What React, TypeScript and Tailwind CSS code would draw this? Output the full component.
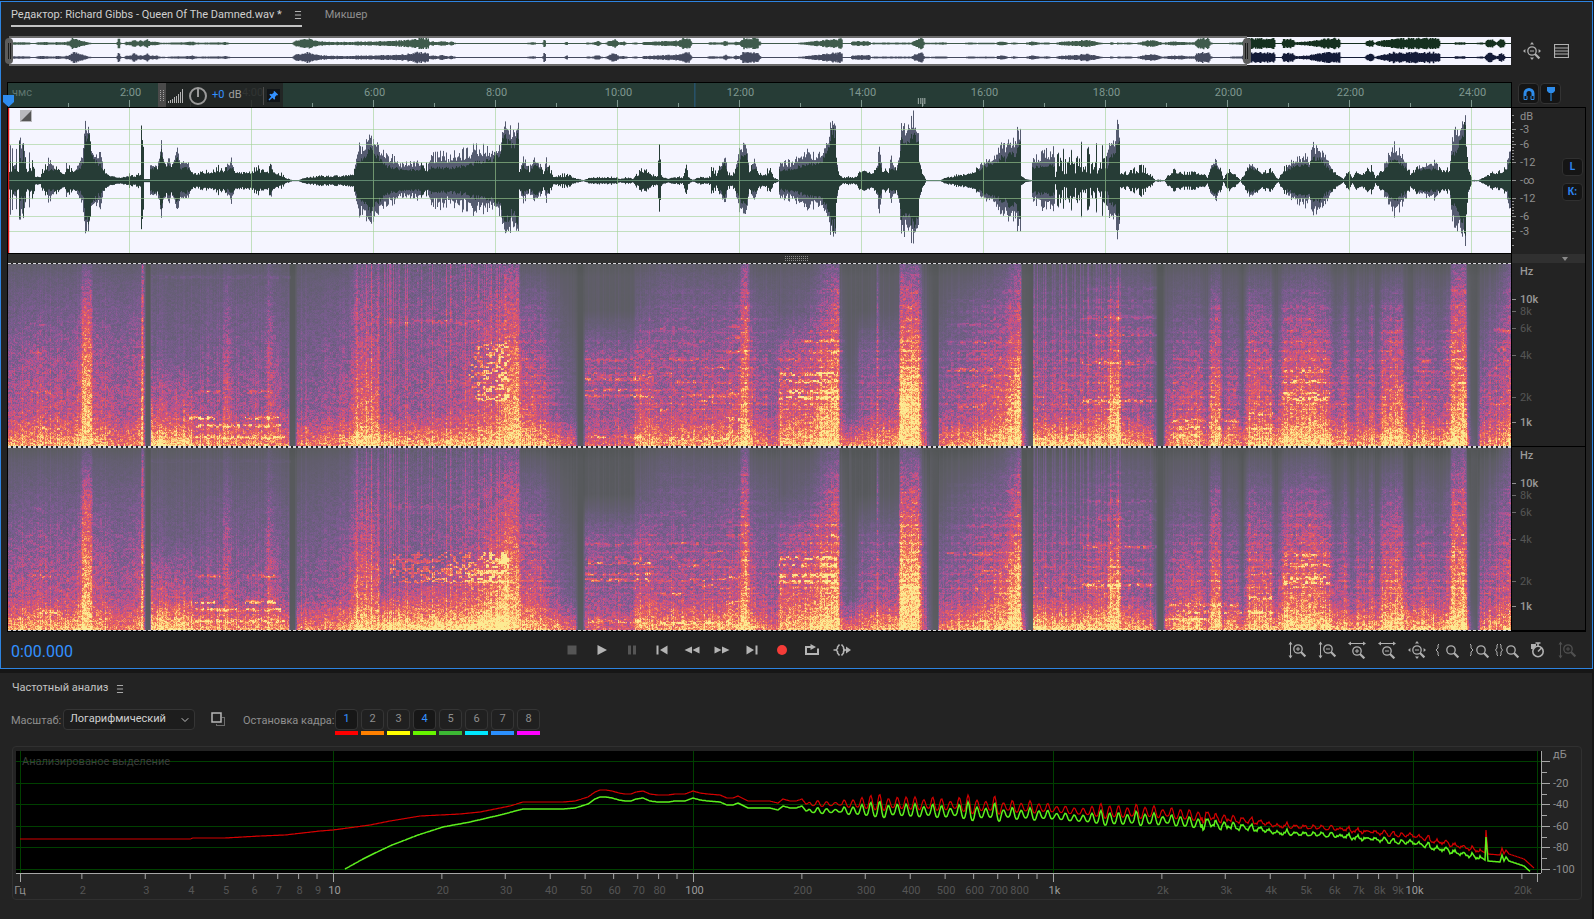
import { useEffect, useRef } from 'react';
import type { ReactNode } from 'react';
import { ChevronDown, Menu } from 'lucide-react';

type Env = [number, number, number];
type Spec = [number, number, number, number, number, number];
type Band = [number, number, number, number];

const WAVE_W = 1503;

// x, body height, peak height
const ENVELOPE: Env[] = [
    [0, 8, 44], [24, 8, 46], [26, 3, 4], [31, 3, 5], [35, 8, 18], [39, 10, 25], [43, 10, 18], [51, 7, 12], [55, 6, 10],
    [57, 10, 22], [61, 8, 18], [66, 8, 14], [71, 12, 22], [74, 18, 35], [76, 40, 60], [80, 42, 59], [82, 26, 36],
    [86, 18, 28], [91, 15, 36], [94, 8, 14], [98, 5, 6], [103, 3, 4], [111, 2, 3], [118, 3, 5], [121, 4, 8], [125, 3, 4],
    [131, 5, 9], [132, 48, 49], [134, 30, 35], [135, 1, 1], [140, 1, 1], [141, 10, 16], [146, 12, 18], [148, 10, 12],
    [152, 28, 42], [154, 20, 24], [157, 12, 14], [159, 18, 31], [162, 12, 14], [168, 24, 34], [171, 12, 18], [179, 12, 22],
    [184, 5, 7], [191, 5, 9], [201, 7, 12], [214, 8, 18], [222, 12, 26], [227, 6, 9], [241, 6, 11], [254, 8, 19],
    [258, 6, 9], [262, 10, 20], [266, 5, 7], [272, 4, 8], [278, 1, 2], [283, 0, 0], [289, 0, 0], [296, 2, 3], [311, 3, 5],
    [331, 3, 5], [344, 5, 6], [346, 12, 20], [349, 20, 42], [353, 20, 38], [358, 28, 47], [362, 30, 46], [369, 22, 40],
    [376, 14, 29], [386, 12, 26], [391, 10, 19], [406, 10, 22], [418, 9, 19], [420, 12, 29], [441, 12, 31], [461, 15, 35],
    [466, 17, 40], [481, 19, 34], [491, 26, 36], [493, 38, 62], [497, 42, 66], [502, 33, 54], [506, 36, 62], [509, 46, 62],
    [510, 8, 14], [514, 14, 30], [520, 8, 14], [525, 16, 24], [531, 10, 17], [534, 6, 10], [536, 12, 26], [541, 6, 14],
    [544, 3, 4], [556, 3, 8], [568, 1, 2], [574, 0, 0], [581, 2, 3], [606, 2, 4], [611, 1, 1], [616, 2, 4], [624, 1, 2],
    [626, 3, 6], [633, 7, 14], [636, 8, 14], [641, 4, 8], [648, 3, 5], [650, 36, 37], [652, 3, 5], [659, 1, 2],
    [663, 2, 4], [674, 2, 4], [677, 14, 18], [679, 2, 4], [684, 0, 1], [691, 2, 4], [701, 2, 4], [702, 8, 18], [707, 4, 8],
    [715, 16, 29], [719, 5, 9], [724, 4, 9], [730, 20, 34], [736, 28, 42], [738, 20, 30], [740, 8, 12], [746, 12, 24],
    [750, 5, 9], [756, 4, 7], [759, 6, 16], [762, 7, 14], [764, 2, 3], [769, 0, 1], [770, 10, 22], [781, 10, 22],
    [791, 14, 26], [797, 15, 32], [811, 17, 29], [815, 22, 46], [819, 32, 48], [822, 46, 64], [826, 48, 62], [827, 20, 25],
    [829, 6, 9], [833, 2, 3], [844, 2, 5], [847, 3, 4], [851, 8, 12], [857, 8, 12], [861, 6, 8], [867, 8, 16],
    [870, 18, 36], [873, 8, 14], [879, 6, 12], [882, 12, 26], [887, 8, 14], [890, 20, 25], [892, 38, 58], [898, 40, 58],
    [902, 44, 72], [906, 44, 68], [909, 38, 56], [910, 18, 20], [913, 6, 8], [917, 0, 0], [931, 0, 0], [936, 2, 3],
    [946, 3, 5], [950, 4, 10], [956, 4, 6], [966, 8, 12], [976, 14, 22], [986, 17, 26], [992, 22, 40], [997, 20, 36],
    [1000, 26, 50], [1006, 26, 44], [1009, 32, 64], [1011, 35, 52], [1012, 4, 5], [1016, 1, 1], [1022, 0, 0],
    [1023, 12, 22], [1031, 14, 32], [1045, 14, 36], [1046, 3, 14], [1049, 6, 36], [1065, 6, 36], [1075, 6, 40],
    [1096, 6, 44], [1100, 20, 38], [1106, 28, 50], [1108, 34, 64], [1110, 36, 52], [1111, 6, 10], [1119, 5, 9],
    [1125, 6, 14], [1134, 8, 18], [1141, 4, 7], [1146, 0, 1], [1155, 0, 0], [1159, 4, 7], [1166, 7, 13], [1176, 5, 9],
    [1185, 6, 9], [1196, 5, 8], [1198, 2, 3], [1201, 10, 15], [1206, 15, 23], [1211, 8, 15], [1214, 1, 2], [1220, 8, 12],
    [1226, 4, 6], [1231, 0, 0], [1236, 6, 10], [1241, 13, 18], [1248, 9, 13], [1253, 5, 8], [1261, 8, 14], [1267, 2, 3],
    [1269, 1, 1], [1274, 8, 13], [1284, 13, 26], [1291, 14, 25], [1295, 16, 30], [1300, 14, 20], [1303, 22, 40],
    [1311, 20, 34], [1316, 15, 27], [1324, 7, 10], [1331, 3, 4], [1334, 1, 1], [1339, 8, 12], [1343, 2, 3], [1347, 7, 10],
    [1353, 5, 8], [1361, 8, 19], [1366, 2, 3], [1371, 6, 11], [1377, 12, 22], [1381, 18, 34], [1383, 20, 50],
    [1386, 18, 38], [1391, 17, 38], [1396, 12, 22], [1401, 5, 8], [1409, 10, 15], [1416, 12, 17], [1421, 10, 19],
    [1425, 12, 23], [1431, 8, 13], [1440, 8, 14], [1442, 24, 42], [1446, 28, 55], [1451, 40, 62], [1456, 54, 68],
    [1457, 32, 35], [1459, 10, 14], [1463, 0, 1], [1469, 0, 0], [1476, 3, 4], [1486, 6, 12], [1497, 8, 15],
    [1500, 20, 40], [1503, 30, 42],
];

// the part of the overview that lies after the zoomed range
const OVERVIEW_TAIL: Env[] = [
    [1238, 36, 40], [1265, 38, 40], [1267, 2, 2], [1273, 3, 4], [1275, 28, 30], [1284, 26, 30], [1287, 8, 8],
    [1300, 14, 14], [1331, 40, 40], [1332, 6, 6], [1334, 0, 0], [1356, 0, 0], [1358, 14, 16], [1364, 24, 24],
    [1366, 3, 3], [1369, 12, 16], [1385, 30, 30], [1430, 40, 40], [1432, 0, 0], [1446, 0, 0], [1447, 8, 8],
    [1456, 8, 8], [1458, 1, 1], [1474, 7, 7], [1476, 0, 0], [1479, 26, 28], [1484, 26, 28], [1488, 6, 6],
    [1492, 24, 24], [1495, 22, 24], [1497, 0, 0], [1503, 0, 0],
];

// x, then level at 0, 25, 50, 80 and 100 percent of the height from the top
const SPECTRUM_COLUMNS: Spec[] = [
    [0, .2, .31, .42, .52, .9], [20, .2, .34, .46, .58, .92], [60, .2, .34, .44, .56, .92], [70, .22, .34, .48, .62, .95],
    [74, .32, .62, .78, .9, 1], [81, .32, .62, .78, .9, 1], [84, .22, .36, .48, .62, .95], [110, .2, .34, .42, .5, .8],
    [131, .2, .36, .46, .56, .85], [133, .5, .7, .8, .9, 1], [135, .3, .4, .45, .5, .6], [137, .06, .06, .06, .07, .1],
    [140, .04, .04, .04, .05, .08], [142, .2, .27, .34, .6, 1], [182, .2, .27, .33, .58, 1], [186, .2, .27, .34, .48, .85],
    [212, .2, .3, .38, .48, .85], [218, .26, .42, .54, .66, .9], [224, .2, .3, .38, .48, .85], [254, .2, .3, .38, .48, .85],
    [260, .28, .42, .56, .66, .9], [266, .22, .32, .42, .54, .88], [279, .18, .26, .34, .42, .8], [281, .04, .04, .04, .05, .08],
    [285, .04, .04, .04, .05, .08], [288, .18, .26, .34, .42, .8], [340, .22, .34, .42, .52, .9], [346, .34, .48, .58, .74, 1],
    [368, .38, .5, .58, .74, 1], [372, .32, .4, .42, .45, .92], [460, .38, .45, .5, .56, .96], [490, .4, .54, .63, .72, 1],
    [497, .46, .64, .74, .86, 1], [509, .46, .64, .76, .92, 1], [511, .16, .36, .5, .64, .98], [530, .16, .36, .48, .6, .92],
    [545, .12, .24, .34, .44, .86], [566, .1, .12, .2, .28, .7], [569, .04, .04, .04, .05, .08], [573, .04, .04, .04, .05, .08],
    [576, .12, .12, .44, .46, .7], [625, .12, .12, .42, .44, .7], [627, .16, .26, .5, .6, .92], [645, .18, .28, .48, .58, .94],
    [651, .22, .34, .44, .54, .88], [720, .18, .34, .44, .56, .92], [730, .22, .38, .48, .62, .95], [733, .42, .6, .7, .82, 1],
    [738, .42, .6, .7, .82, 1], [741, .16, .32, .44, .56, .9], [768, .14, .26, .38, .44, .7], [770, .16, .2, .46, .64, .9],
    [800, .16, .3, .56, .7, 1], [822, .36, .54, .68, .88, 1], [829, .4, .58, .7, .9, 1], [831, .12, .22, .36, .48, .85],
    [840, .1, .1, .14, .26, .8], [847, .1, .1, .2, .32, .8], [850, .1, .1, .36, .44, .84], [866, .1, .12, .38, .48, .88],
    [868, .28, .42, .5, .58, 1], [871, .1, .14, .36, .48, .9], [889, .1, .16, .38, .52, .95], [891, .38, .6, .8, .98, 1],
    [909, .38, .6, .8, .98, 1], [914, .12, .24, .38, .44, .66], [924, .05, .05, .05, .07, .1], [928, .04, .04, .04, .05, .08],
    [930, .1, .18, .32, .44, .8], [966, .12, .32, .44, .52, .92], [990, .2, .38, .5, .68, 1], [1006, .36, .54, .68, .88, 1],
    [1011, .42, .58, .72, .92, 1], [1013, .1, .12, .3, .4, .8], [1020, .06, .06, .06, .08, .12],
    [1023, .04, .04, .04, .05, .08], [1024, .2, .32, .42, .52, 1], [1071, .2, .32, .42, .52, .98], [1097, .22, .38, .48, .62, .98],
    [1101, .28, .46, .6, .88, 1], [1110, .28, .46, .6, .88, 1], [1112, .2, .34, .42, .48, .92], [1143, .18, .32, .4, .44, .86],
    [1149, .04, .04, .04, .06, .1], [1153, .04, .04, .04, .05, .08], [1156, .12, .18, .32, .44, .7],
    [1166, .14, .28, .42, .58, .92], [1191, .14, .28, .44, .62, .94], [1198, .1, .16, .28, .38, .7], [1202, .2, .44, .58, .76, 1],
    [1210, .2, .44, .58, .76, 1], [1214, .1, .16, .28, .38, .8], [1219, .12, .28, .42, .56, .92], [1228, .12, .24, .4, .54, .88],
    [1233, .08, .1, .2, .34, .8], [1239, .16, .42, .56, .7, .96], [1261, .14, .36, .48, .66, .96], [1267, .08, .14, .26, .42, .9],
    [1274, .16, .4, .54, .7, 1], [1306, .22, .44, .6, .78, 1], [1321, .14, .34, .48, .6, 1], [1326, .1, .2, .34, .5, .92],
    [1336, .12, .32, .48, .6, .92], [1343, .08, .14, .26, .38, .8], [1348, .12, .32, .44, .58, .92], [1357, .1, .2, .34, .46, .88],
    [1362, .12, .38, .5, .64, .92], [1367, .08, .14, .26, .38, .8], [1373, .12, .38, .52, .68, 1], [1391, .16, .42, .58, .76, 1],
    [1397, .1, .16, .32, .5, .92], [1403, .08, .12, .28, .48, .92], [1407, .12, .32, .42, .54, .96], [1431, .1, .24, .36, .5, .9],
    [1440, .12, .34, .48, .6, 1], [1443, .38, .56, .68, .8, 1], [1456, .42, .58, .7, .82, 1], [1458, .1, .22, .34, .48, .9],
    [1462, .06, .07, .09, .12, .3], [1467, .04, .05, .06, .08, .15], [1471, .1, .18, .32, .46, .8],
    [1486, .12, .32, .42, .54, .86], [1499, .32, .44, .52, .64, .98], [1503, .32, .44, .52, .64, .98],
];

// x start, x end, height from the top, boost
const BANDS: Band[] = [
    [142, 282, .07, .1], [186, 212, .7, .3], [238, 266, .7, .28], [180, 206, .845, .45], [236, 270, .845, .42],
    [186, 272, .885, .32], [186, 276, .95, .22], [375, 470, .31, .14], [375, 470, .325, .12],
    [576, 642, .63, .34], [576, 640, .72, .34], [576, 642, .6, .2], [576, 642, .69, .22], [576, 620, .53, .14], [576, 632, .95, .2],
    [717, 731, .34, .3], [717, 731, .4, .28], [717, 731, .48, .3], [717, 731, .71, .36], [717, 731, .85, .4],
    [651, 678, .35, .2], [660, 690, .52, .2], [651, 672, .8, .25], [668, 700, .64, .24], [680, 720, .72, .2],
    [651, 668, .6, .22], [674, 690, .44, .16], [690, 704, .75, .22], [696, 716, .57, .18], [651, 720, .96, .2],
    [770, 829, .6, .36], [770, 829, .64, .34], [770, 829, .7, .36], [770, 829, .735, .38], [790, 836, .42, .18], [800, 836, .48, .2],
    [938, 990, .33, .2], [938, 990, .43, .16], [938, 984, .58, .32], [945, 990, .67, .2], [945, 975, .78, .2], [938, 990, .2, .1],
    [938, 990, .49, .14], [938, 990, .26, .1],
    [1073, 1148, .29, .22], [1073, 1148, .39, .24], [1073, 1148, .54, .32], [1073, 1148, .75, .4], [1073, 1148, .2, .12],
    [1112, 1136, .67, .22], [1112, 1140, .35, .14], [1076, 1148, .13, .1], [1274, 1321, .585, .3], [1274, 1321, .64, .32],
    [1274, 1321, .71, .3], [1274, 1321, .74, .32], [1160, 1230, .86, .26], [1240, 1264, .82, .26], [1160, 1264, .9, .22],
    [1156, 1200, .94, .2], [1408, 1424, .46, .24], [1434, 1446, .46, .24], [1408, 1424, .53, .22], [1434, 1446, .53, .22],
    [1484, 1500, .46, .2], [1484, 1500, .36, .2], [1408, 1446, .59, .18], [20, 38, .33, .14], [20, 38, .48, .18],
    [20, 42, .7, .18], [30, 50, .9, .2],
];

const PALETTE: [number, number, number, number][] = [
    [0, 83, 86, 87], [.1, 93, 93, 100], [.24, 104, 94, 122], [.4, 126, 92, 148], [.53, 176, 84, 150],
    [.65, 214, 82, 116], [.77, 238, 104, 86], [.88, 252, 172, 100], [1, 252, 234, 146],
];

function createRandom(seed: number) {
    let s = seed;
    return () => {
        s = (s * 1664525 + 1013904223) % 4294967296;
        return s / 4294967296;
    };
}

function sample(points: number[][], x: number, column: number) {
    let i = 1;
    while (i < points.length - 1 && points[i][0] < x) i++;
    const a = points[i - 1];
    const b = points[i];
    const f = Math.min(1, Math.max(0, (x - a[0]) / (b[0] - a[0])));
    return a[column] + (b[column] - a[column]) * f;
}

function buildWave() {
    const rand = createRandom(11);
    let dark = '';
    let light = '';
    for (let x = 0; x < WAVE_W; x++) {
        const body = sample(ENVELOPE, x - 1, 1);
        const peak = sample(ENVELOPE, x - 1, 2);
        const wide = body > 9.5;
        const spike = wide ? 0.3 + 0.7 * Math.pow(rand(), 1.4) : Math.pow(rand(), 1.7);
        const outer = body + (peak - body) * spike;
        // wide bodies keep the second channel visible behind the first one
        let inner = outer * 0.96;
        if (wide) inner = body * (0.88 + rand() * 0.26);
        else if (x < 24 && rand() < 0.5) inner = body + (outer - body) * 0.4;
        const low = outer > 10 ? 0.84 + rand() * 0.16 : 1;
        const y = 72.5;
        light += `M${x + 0.5} ${(y - outer).toFixed(1)}V${(y + outer * low + 0.6).toFixed(1)}`;
        dark += `M${x + 0.5} ${(y - inner - 0.4).toFixed(1)}V${(y + inner * low + 0.6).toFixed(1)}`;
    }
    return { dark, light };
}

function buildOverview(center: number, from: number, to: number, seed: number) {
    const rand = createRandom(seed);
    const ratio = 1238 / WAVE_W;
    let d = '';
    for (let x = from; x < to; x++) {
        const level = x < 1238 ? sample(ENVELOPE, x / ratio, 1) : sample(OVERVIEW_TAIL, x, 1);
        const amp = Math.min(4.8, Math.max(0, level - 4) / 5.5) * (0.6 + rand() * 0.5) + 0.5;
        d += `M${x + 0.5} ${(center - amp).toFixed(1)}V${(center + amp).toFixed(1)}`;
    }
    return d;
}

const wave = buildWave();

const RED_LINE = [
    [20, 839], [190, 839], [193, 838], [225, 838], [260, 836], [285, 835], [320, 831], [333, 830], [370, 825], [390, 821],
    [420, 816], [460, 814], [480, 812], [510, 806], [523, 802], [563, 802], [575, 801], [588, 797], [595, 792], [600, 790],
    [606, 790], [612, 791], [619, 793], [625, 794], [631, 794], [636, 792], [643, 791], [650, 794], [658, 795], [668, 795],
    [675, 794], [685, 794], [693, 791], [700, 793], [708, 794], [720, 795], [727, 798], [733, 798], [738, 796], [748, 801],
    [770, 801], [778, 803], [783, 799], [790, 801], [796, 801], [802, 799], [806, 804],
    [860, 804], [900, 804], [1000, 807], [1053, 809], [1080, 812], [1160, 813], [1200, 817], [1250, 821], [1280, 826],
    [1330, 828], [1380, 833], [1413, 836], [1440, 842], [1482, 851], [1485, 853], [1486, 830], [1488, 854], [1500, 855],
    [1502, 848], [1504, 854], [1506, 850], [1509, 854], [1524, 859], [1534, 868],
];
const GREEN_START = [[345, 869], [363, 859], [375, 853], [392, 845], [400, 842], [418, 835], [443, 827], [470, 822], [500, 815], [523, 809]];
const RIPPLE = [
    [0, 0], [806, 0], [810, 2], [845, 3], [862, 6], [1000, 7], [1040, 6], [1055, 3], [1060, 5], [1160, 6], [1210, 5],
    [1230, 3], [1260, 2], [1290, 2], [1480, 2], [1482, 0], [1540, 0],
];

function buildSpectrum(green: boolean) {
    const rand = createRandom(5);
    const points: string[] = [];
    let phase = 0;
    let gain = 1;
    for (let x = 20; x <= (green ? 1530 : 1534); x++) {
        phase += 0.71;
        if (phase > Math.PI * 2) {
            phase -= Math.PI * 2;
            gain = 0.45 + rand() * 0.95;
        }
        const noise = rand() - 0.5;
        if (green && x < 345) continue;
        let y = green && x < 523 ? sample(GREEN_START, x, 1) : sample(RED_LINE, x, 1) + (green ? 7 : 0);
        const depth = sample(RIPPLE, x, 1);
        const swing = 0.8 - 2 * Math.pow((1 + Math.sin(phase)) / 2, 1.4);
        y += (swing * gain + (x > 1200 ? noise * 1.2 : 0)) * depth;
        points.push(`${x - 16},${(y - 751).toFixed(1)}`);
    }
    return points.join(' ');
}

const redPoints = buildSpectrum(false);
const greenPoints = buildSpectrum(true);

function Spectrogram({ channel, label }: { channel: number; label: string }) {
    const ref = useRef<HTMLCanvasElement>(null);

    useEffect(() => {
        const canvas = ref.current;
        const ctx = canvas?.getContext('2d');
        if (!canvas || !ctx) return;
        const { width, height } = canvas;
        const image = ctx.createImageData(width, height);
        const rand = createRandom(77 + channel * 31);
        const cells = Array.from({ length: 600 * 100 }, () => rand() - 0.5);
        const streakRand = createRandom(19);
        const streaks = Array.from({ length: width }, () => Math.pow(streakRand(), 3));

        for (let px = 0; px < width; px++) {
            const x = Math.max(0, px - 1);
            const c = [1, 2, 3, 4, 5].map((n) => sample(SPECTRUM_COLUMNS, x, n));
            const striped = (x > 346 && x < 510) || (x > 1024 && x < 1112);
            const streak = striped ? streaks[x] * 0.2 - 0.05 : (streaks[x] - 0.25) * 0.1;
            const active = c[2] > 0.15;
            const bands = BANDS.filter((b) => x >= b[0] && x < b[1]);
            for (let y = 0; y < height; y++) {
                const t = y / height;
                let v: number;
                if (t < 0.25) v = c[0] + ((c[1] - c[0]) * t) / 0.25;
                else if (t < 0.5) v = c[1] + ((c[2] - c[1]) * (t - 0.25)) / 0.25;
                else if (t < 0.8) v = c[2] + ((c[3] - c[2]) * (t - 0.5)) / 0.3;
                else v = c[3] + (c[4] - c[3]) * Math.pow((t - 0.8) / 0.2, 1.25);
                if (channel === 1 && active) v -= 0.06 * (1 - t);
                const cell = cells[(y >> 1) * 600 + Math.floor(x / 3)];
                const spread = Math.max(0.02, Math.min(1, (v - 0.15) * 3));
                if (active) v += streak * (striped ? 1.3 - t * 0.6 : t + 0.5);
                v += ((rand() - 0.5) * 0.24 + cell * 0.19) * spread;
                for (const b of bands) {
                    const lift = channel === 1 && b[2] < 0.5 ? 0.5 : 0.85;
                    const distance = Math.abs(y - b[2] * height);
                    if (distance < 2) v += b[3] * lift * (1 - distance * 0.3) * (0.5 + cell * 1.2 + rand() * 0.4);
                }
                // bright strings section, lower and wider on the second channel
                const inside = channel === 0
                    ? x > 458 + Math.abs(t - 0.6) * 60 && x < 500 && t > 0.43 && t < 0.75
                    : x > 380 && x < 500 && t > 0.57 && t < 0.74;
                if (inside && (cell > 0.16 || (channel === 1 && cell > -0.2 && Math.sin(t * 105 - 0.6) > 0.45))) v += 0.2;
                // ragged slope that rises towards the loud end
                if (channel === 1 && x > 372 && x < 500) {
                    const edge = 0.74 - (x - 372) * 0.0022;
                    if (t > edge) v += Math.min(0.12, (t - edge) * 0.8);
                }
                // fading harmonics of the sustained parts
                if (active && x > 510 && t > 0.1 && t < 0.8 && Math.sin(t * t * 90 + 40 * t) > 0.6) v += (0.07 + cell * 0.08) * spread;
                if (y < 13) v -= Math.max(0, 0.05 - y * 0.004);
                v = Math.max(0, Math.min(1, v));
                let k = 1;
                while (k < PALETTE.length - 1 && PALETTE[k][0] < v) k++;
                const a = PALETTE[k - 1];
                const b = PALETTE[k];
                const f = (v - a[0]) / (b[0] - a[0]);
                const o = (y * width + px) * 4;
                image.data[o] = a[1] + (b[1] - a[1]) * f;
                image.data[o + 1] = a[2] + (b[2] - a[2]) * f;
                image.data[o + 2] = a[3] + (b[3] - a[3]) * f;
                image.data[o + 3] = 255;
            }
        }
        ctx.putImageData(image, 0, 0);
    }, [channel]);

    return (
        <div className="border-y border-dashed border-[#d8d8dc]">
            <canvas ref={ref} width={WAVE_W} height={182} aria-label={label} className="block h-[182px] w-full" />
        </div>
    );
}

function Lens({ sign }: { sign?: 'plus' | 'minus' }) {
    return (
        <g fill="none" stroke="currentColor">
            <circle cx="8" cy="8" r="4.2" strokeWidth="1.3" />
            <path d="M11 11l4.4 4.4" strokeWidth="2.2" />
            {sign && <path d="M6 8h4" />}
            {sign === 'plus' && <path d="M8 6v4" />}
        </g>
    );
}

function ToolIcon({ children, wide }: { children: ReactNode; wide?: boolean }) {
    return (
        <svg viewBox={wide ? '-6 0 24 18' : '0 0 18 18'} className={wide ? 'h-[18px] w-6' : 'size-[18px]'} fill="none" stroke="currentColor">
            {children}
        </svg>
    );
}

const VERTICAL_ARROW = (
    <>
        <path d="M2.5 2v14" />
        <path d="M2.5 .5l2 3h-4zM2.5 17.5l2-3h-4z" fill="currentColor" stroke="none" />
    </>
);
const HORIZONTAL_ARROW = (
    <>
        <path d="M1 2.5h16" />
        <path d="M0 2.5l3-2v4zM18 2.5l-3-2v4z" fill="currentColor" stroke="none" />
    </>
);

function FullZoom() {
    return (
        <ToolIcon>
            <g transform="translate(1 1)"><Lens sign="minus" /></g>
            <path d="M9 0l2 2.4H7zM9 18l-2-2.4h4zM0 9l2.4-2v4zM18 9l-2.4-2v4z" fill="currentColor" stroke="none" />
        </ToolIcon>
    );
}

const ZOOM_TOOLS = [
    { label: 'Увеличить амплитуду', icon: <ToolIcon>{VERTICAL_ARROW}<g transform="translate(2 0)"><Lens sign="plus" /></g></ToolIcon> },
    { label: 'Уменьшить амплитуду', icon: <ToolIcon>{VERTICAL_ARROW}<g transform="translate(2 0)"><Lens sign="minus" /></g></ToolIcon> },
    { label: 'Увеличить время', icon: <ToolIcon>{HORIZONTAL_ARROW}<g transform="translate(1 2)"><Lens sign="plus" /></g></ToolIcon> },
    { label: 'Уменьшить время', icon: <ToolIcon>{HORIZONTAL_ARROW}<g transform="translate(1 2)"><Lens sign="minus" /></g></ToolIcon> },
    { label: 'Показать всё', icon: <FullZoom /> },
    { label: 'К точке входа', icon: <ToolIcon wide><path d="M-2 3l-1 1v3l-2 2 2 2v3l1 1" /><g transform="translate(2 1)"><Lens /></g></ToolIcon> },
    { label: 'К точке выхода', icon: <ToolIcon wide><path d="M-1 3l1 1v3l2 2-2 2v3l-1 1" /><g transform="translate(2 1)"><Lens /></g></ToolIcon> },
    { label: 'К выделению', icon: <ToolIcon wide><path d="M-3 3l-1 1v3l-1.5 2L-4 11v3l1 1M-1 3l1 1v3l1.5 2L0 11v3l-1 1" /><g transform="translate(2 1)"><Lens /></g></ToolIcon> },
    {
        label: 'Таймер',
        icon: (
            <ToolIcon>
                <circle cx="10" cy="10.5" r="5.2" strokeWidth="1.6" />
                <path d="M10 5V2M7.5 2h5M10 10.5l3.500-3.500" strokeWidth="1.6" />
                <path d="M3 3h5v2L5 8H3z" fill="currentColor" stroke="none" />
            </ToolIcon>
        ),
    },
];

const TRANSPORT = [
    { label: 'Стоп', off: true, icon: <path d="M4.5 4.5h9v9h-9z" /> },
    { label: 'Воспроизведение', off: false, icon: <path d="M4.5 4l9.5 5-9.5 5z" /> },
    { label: 'Пауза', off: true, icon: <path d="M5 4.5h3v9H5zM10 4.5h3v9h-3z" /> },
    { label: 'В начало', off: false, icon: <path d="M3.5 4.5h2v9h-2zM14.5 4.5v9L7 9z" /> },
    { label: 'Назад', off: false, icon: <path d="M9 5.5v7L1.5 9zM16.5 5.5v7L9.5 9z" /> },
    { label: 'Вперёд', off: false, icon: <path d="M1.5 5.5v7L8.5 9zM9 5.5v7L16.5 9z" /> },
    { label: 'В конец', off: false, icon: <path d="M3.5 4.5v9L11 9zM12.5 4.5h2v9h-2z" /> },
    { label: 'Запись', off: false, icon: <circle cx="9" cy="9" r="5" fill="#f53c38" /> },
    { label: 'Цикл', off: false, icon: <path d="M2 5h5.5V3l5.5 3-5.5 3V7H4v5h10V7.5h2V14H2z" /> },
    {
        label: 'Пропуск выделения',
        off: false,
        icon: (
            <>
                <path d="M6.5 3.5L4.5 6v1.500L3 9l1.500 1.500V12l2 2.500M8.5 3.5l2 2.500v1.500L12 9l-1.500 1.500V12l-2 2.500M.5 9H4M10 9h4" fill="none" stroke="currentColor" strokeWidth="1.5" />
                <path d="M13 5.500L18 9l-5 3.500z" />
            </>
        ),
    },
];

const DB_LABELS: [number, string][] = [[9, 'dB'], [22, '-3'], [37, '-6'], [55, '-12'], [73, '-∞'], [91, '-12'], [109, '-6'], [124, '-3']];
const HZ_LABELS: [number, string, boolean][] = [[8, 'Hz', true], [36, '10k', true], [48, '8k', false], [65, '6k', false], [92, '4k', false], [134, '2k', false], [159, '1k', true]];

function DecibelScale() {
    const ticks = [8, 15, 22, 26, 30, 34, 37, 40, 43, 46, 49, 52, 55, 91, 94, 97, 100, 103, 106, 109, 113, 117, 120, 124, 131, 138];
    return (
        <svg className="h-[146px] w-full" fontSize="11" fill="#8f8f8f">
            {ticks.map((y) => (
                <path key={y} d={`M0 ${y - 0.5}h2`} stroke="#8f8f8f" />
            ))}
            {DB_LABELS.map(([y, text], i) => (
                <g key={i}>
                    {i > 0 && <path d={`M0 ${y - 0.5}h4`} stroke="#8f8f8f" />}
                    <text x="8" y={y + 3}>{text}</text>
                </g>
            ))}
        </svg>
    );
}

function FrequencyScale() {
    return (
        <svg className="block h-[184px] w-full border-b border-black" fontSize="11">
            {HZ_LABELS.map(([y, text, bright], i) => (
                <g key={text} fill={bright ? '#999999' : '#555555'} fontWeight={bright ? 500 : 400}>
                    {i > 0 && <path d={`M0 ${y + 0.5}h4`} stroke={bright ? '#8f8f8f' : '#6a6a6a'} />}
                    <text x="8" y={y + 4}>{text}</text>
                </g>
            ))}
        </svg>
    );
}

function TimeRuler() {
    const minutes = Array.from({ length: 24 }, (_, i) => i + 1);
    const at = (m: number) => `${((m * 61 - 0.5) / WAVE_W) * 100}%`;
    return (
        <svg className="block h-[24px] w-full bg-[#263c36]" fontSize="11" fill="#7f978f" aria-label="Шкала времени">
            <text x="4" y="13" fill="#5f7670">чмс</text>
            {minutes.map((m) => (
                <g key={m}>
                    <line x1={at(m)} x2={at(m)} y1={m % 2 ? 20 : 17} y2="24" stroke="#7f978f" />
                    {m % 2 === 0 && <text x={at(m)} y="13" dx="1" textAnchor="middle">{`${m}:00`}</text>}
                </g>
            ))}
            <line x1="45.7%" x2="45.7%" y1="0" y2="24" stroke="#2a5f86" />
            <svg x="60.5%" y="15">
                <path d="M1 0v6M3.5 0v6M5.5 0v8M7.5 0v6" stroke="#a9b5b1" />
            </svg>
        </svg>
    );
}

function Waveform() {
    const rows = [22, 37, 55, 91, 109, 124];
    return (
        <svg viewBox="0 0 1503 145" preserveAspectRatio="none" className="block h-[145px] w-full bg-[#f5f5ff]" aria-label="Форма волны">
            <path d={wave.light} stroke="#555b70" />
            <path d={wave.dark} stroke="#263c36" />
            <g stroke="#a0d094" strokeOpacity="0.6">
                {rows.map((y) => <path key={y} d={`M0 ${y - 0.5}H1503`} />)}
                {Array.from({ length: 12 }, (_, i) => <path key={i} d={`M${121.5 + i * 122} 0V145`} />)}
            </g>
            <path d="M0 72.5H1503" stroke="#6f9c80" strokeOpacity="0.8" />
            <path d="M.5 0V145" stroke="#e01818" strokeWidth="1.5" />
        </svg>
    );
}

function Grip({ side }: { side: string }) {
    return (
        <span className={`absolute inset-y-0 flex w-2 items-center justify-center gap-px rounded-full bg-[#5c5c5c] ${side}`}>
            <i className="h-4 w-px bg-[#1c1c1c]" />
            <i className="h-4 w-px bg-[#1c1c1c]" />
        </span>
    );
}

function Overview() {
    return (
        <div className="relative h-[30px] min-w-0 flex-1">
            <svg viewBox="0 0 1503 28" preserveAspectRatio="none" className="mt-px block h-[28px] w-full bg-[#f5f5ff]" strokeWidth="1.6" aria-label="Обзор файла">
                <path d={buildOverview(6.5, 0, 1238, 3)} stroke="#3f5b4c" />
                <path d={buildOverview(20.5, 0, 1238, 4)} stroke="#454a5f" />
                <path d={buildOverview(6.5, 1238, 1503, 3)} stroke="#15301f" />
                <path d={buildOverview(20.5, 1238, 1503, 4)} stroke="#141b38" />
            </svg>
            <div className="absolute inset-y-0 left-0 w-[82.4%] border-y-2 border-[#6b6b6b]">
                <Grip side="left-0 -translate-x-1/2" />
                <Grip side="right-0 translate-x-1/2" />
            </div>
        </div>
    );
}

function VolumeHud() {
    return (
        <div className="absolute left-[150px] top-0 flex h-[25px] w-[125px] items-center bg-[#222222]/85 text-[11px]">
            <span className="flex h-full w-2 items-center justify-center bg-[#4a4a4a]">
                <svg width="4" height="12" stroke="#a5a5a5" strokeDasharray="1 1"><path d="M.5 0v12M3.5 0v12" /></svg>
            </span>
            <svg width="16" height="16" className="ml-[2px]" stroke="#b4b4b4">
                <path d="M.5 13v2M2.5 12v3M4.5 11v4M6.5 9v6M8.5 8v7M10.5 6v9M12.5 4v11M14.5 1v14" />
            </svg>
            <svg width="20" height="20" className="ml-1" fill="none" stroke="#9a9a9a" strokeWidth="2">
                <circle cx="10" cy="10" r="8" />
                <path d="M10 3v8" />
            </svg>
            <span className="ml-1 text-[#3391ff]">+0</span>
            <span className="ml-1 text-[#a0a0a0]">dB</span>
            <span className="ml-auto h-[18px] w-px bg-[#4c4c4c]" />
            <button aria-label="Закрепить" className="mx-[3px] flex size-[13px] items-center justify-center bg-[#101418] text-[#3391ff]">
                <svg viewBox="0 0 12 12" className="size-[11px]" fill="currentColor">
                    <path d="M7 1l4 4-1 1-1-.3L7.5 8l.3 1.5-1 1-2-2L1.5 11.5l-1-1 3-3.3-2-2 1-1L4 4.500 6.300 3 6 2z" />
                </svg>
            </button>
        </div>
    );
}

const SNAPSHOTS = [
    { n: 1, bar: 'bg-[#ff0000]', on: true },
    { n: 2, bar: 'bg-[#ff8000]', on: false },
    { n: 3, bar: 'bg-[#ffff00]', on: false },
    { n: 4, bar: 'bg-[#66f500]', on: true },
    { n: 5, bar: 'bg-[#3cb834]', on: false },
    { n: 6, bar: 'bg-[#00e8ff]', on: false },
    { n: 7, bar: 'bg-[#2b90ff]', on: false },
    { n: 8, bar: 'bg-[#ff00ff]', on: false },
];

const PLOT_W = 1525;
const hz = (f: number) => 317.5 + 360 * Math.log10(f / 10);
const hzPercent = (f: number) => `${(hz(f) / PLOT_W) * 100}%`;

function hzLabel(f: number) {
    return f >= 1000 ? `${f / 1000}k` : `${f}`;
}

function FrequencyPlot() {
    const marks = [1, 10, 100, 1000, 10000]
        .flatMap((d) => [1, 2, 3, 4, 5, 6, 7, 8, 9].map((n) => n * d))
        .filter((f) => f > 1 && f <= 20000);
    const hidden = [90, 900];
    const rows = [10.5, 32.5, 53.5, 75.5, 96.5, 118.5];
    return (
        <div className="ml-3 mr-[10px] flex rounded-sm border border-[#303030] pb-[3px] pl-[3px] pt-1">
            <div className="min-w-0 flex-1">
                <div className="relative bg-black">
                    <svg viewBox="0 0 1525 122" preserveAspectRatio="none" className="block h-[122px] w-full" fill="none" aria-label="График спектра">
                        <g stroke="#004000">
                            {rows.map((y) => <path key={y} d={`M0 ${y}H1525`} />)}
                            {[4.5, 317.5, 677.5, 1037.5, 1397.5, 1521.5].map((x) => <path key={x} d={`M${x} 0V122`} />)}
                        </g>
                        <polyline points={redPoints} stroke="#d40000" strokeWidth="1.2" />
                        <polyline points={greenPoints} stroke="#5df01e" strokeWidth="1.5" />
                    </svg>
                    <span className="absolute left-[6px] top-[3px] text-[11px] leading-4 text-[#3a3f3a]">Анализированое выделение</span>
                </div>
                <svg className="block h-[23px] w-full overflow-visible border-t border-[#a6a6a6]" fontSize="11" textAnchor="middle">
                    <line x1="4.5" x2="4.5" y1="0" y2="8" stroke="#a6a6a6" />
                    <text x="4" y="20" fill="#8f8f8f">Гц</text>
                    {marks.map((f) => {
                        const major = [10, 100, 1000, 10000].includes(f);
                        return (
                            <g key={f}>
                                <line x1={hzPercent(f)} x2={hzPercent(f)} y1="0" y2={major ? 8 : 5} stroke="#a6a6a6" />
                                {!hidden.includes(f) && (
                                    <text x={hzPercent(f)} y="20" dx="1" fill={major ? '#9c9c9c' : '#555555'}>{hzLabel(f)}</text>
                                )}
                            </g>
                        );
                    })}
                    <line x1="99.77%" x2="99.77%" y1="0" y2="8" stroke="#a6a6a6" />
                </svg>
            </div>
            <svg className="block h-[130px] w-10 overflow-visible" fontSize="11" fill="#8f8f8f" stroke="none">
                <path d="M.5 0V122" stroke="#a6a6a6" />
                {rows.map((y, i) => (
                    <g key={y}>
                        <path d={`M0 ${y}h9${i < 5 ? `M0 ${y + 11}h6` : ''}`} stroke="#a6a6a6" />
                        {i > 0 && <text x="12" y={y + 3}>{`-${i * 20}`}</text>}
                    </g>
                ))}
                <text x="12" y="7">дБ</text>
            </svg>
        </div>
    );
}

export default function App() {
    return (
        <div className="min-h-screen bg-[#161616] pt-px font-[Roboto,'Noto_Sans',sans-serif] text-[11px] text-[#8f8f8f]">
            <section className="mr-px border border-[#2d83e0] bg-[#232323] pb-1">
                <nav className="flex h-[34px] items-start gap-[23px] pl-[10px] leading-[25px]">
                    <button className="flex h-[25px] items-center gap-3 border-b-2 border-[#c4c4c4] pt-[2px] text-[#d0d0d0]">
                        Редактор: Richard Gibbs - Queen Of The Damned.wav *
                        <Menu className="h-3 w-2" preserveAspectRatio="none" strokeWidth={2} />
                    </button>
                    <button className="h-[25px]">Микшер</button>
                </nav>

                <div className="flex items-center pl-[8px]">
                    <Overview />
                    <div className="flex w-[81px] gap-2 pl-3 text-[#b0b0b0]">
                        <button aria-label="Показать весь файл"><FullZoom /></button>
                        <button aria-label="Список" className="ml-[5px]">
                            <svg width="15" height="14" fill="none" stroke="currentColor" className="block">
                                <path d="M.5.5h14v13H.5zM0 4h15M0 7h15M0 10h15" strokeWidth="1.2" />
                            </svg>
                        </button>
                    </div>
                </div>

                <div className="mt-4 flex pr-[6px]">
                    <div className="ml-[6px] min-w-0 flex-1 border-b border-l border-r border-t border-black">
                        <div className="relative">
                            <TimeRuler />
                            <VolumeHud />
                            <svg width="12" height="12" className="absolute -left-[6px] bottom-0">
                                <path d="M1 0h11v7l-5.5 5L1 7z" fill="#2f8cf0" />
                            </svg>
                        </div>
                        <div className="relative border-y border-black">
                            <Waveform />
                            <svg width="12" height="12" className="absolute left-[12px] top-[2px]">
                                <path d="M0 0h12v12H0z" fill="#b9b9bd" />
                                <path d="M11 1v10H1z" fill="#555555" />
                            </svg>
                        </div>
                        <div className="flex h-[9px] items-center justify-center bg-[#303030]">
                            <svg width="24" height="5" className="ml-[74px]" stroke="#8a8a8a" strokeDasharray="1 1"><path d="M0 .5h24M0 2.5h24M0 4.5h24" /></svg>
                        </div>
                        <Spectrogram channel={0} label="Спектрограмма, левый канал" />
                        <Spectrogram channel={1} label="Спектрограмма, правый канал" />
                    </div>
                    <div className="w-[74px]">
                        <div className="flex h-[25px] items-start gap-px pl-[6px] pt-px">
                            <button aria-label="Привязка" className="flex size-[21px] items-center justify-center rounded-sm border border-[#333333] bg-[#151515]">
                                <svg viewBox="0 0 12 12" className="size-3" fill="none" stroke="#2d8ceb">
                                    <path d="M2 8V5.500a4 4 0 018 0V8" strokeWidth="3" />
                                    <path d="M1 8v3.500h3V8M8 8v3.500h3V8" />
                                </svg>
                            </button>
                            <button aria-label="Маркер" className="flex size-[21px] items-center justify-center rounded-sm border border-[#333333] bg-[#151515]">
                                <svg viewBox="0 0 12 14" className="h-[14px] w-3" fill="#2d8ceb">
                                    <path d="M2 0h8v4L8 6H4L2 4z" />
                                    <path d="M5.2 6h1.600v8H5.200z" fill="#23659f" />
                                </svg>
                            </button>
                        </div>
                        <div className="border-b border-r border-t border-black">
                            <div className="flex h-[146px]">
                                <div className="min-w-0 flex-1"><DecibelScale /></div>
                                <div className="flex flex-col gap-[7px] pr-[2px] pt-[50px] text-[10px] font-bold text-[#2d83f0]">
                                    <button className="h-[18px] w-[21px] rounded-sm border border-[#303030] bg-[#151515] leading-4">L</button>
                                    <button className="h-[18px] w-[21px] rounded-sm border border-[#303030] bg-[#151515] leading-4">К:</button>
                                </div>
                            </div>
                            <div className="flex h-[9px] items-center justify-end bg-[#303030] pr-[17px]">
                                <svg width="6" height="4"><path d="M0 0h6L3 4z" fill="#8a8a8a" /></svg>
                            </div>
                            <FrequencyScale />
                            <FrequencyScale />
                        </div>
                    </div>
                </div>

                <div className="flex h-8 items-center pl-[10px] pr-[10px] pt-1">
                    <output className="min-w-0 flex-1 pt-1 text-[16px] text-[#3391ff]">0:00.000</output>
                    <div className="flex text-[#b4b4b4]">
                        {TRANSPORT.map((t) => (
                            <button key={t.label} aria-label={t.label} disabled={t.off} className="flex w-[30px] justify-center disabled:text-[#555555]">
                                <svg viewBox="0 0 18 18" className="size-[18px]" fill="currentColor">{t.icon}</svg>
                            </button>
                        ))}
                    </div>
                    <div className="flex flex-1 justify-end pl-[180px] text-[#b0b0b0]">
                        {ZOOM_TOOLS.map((t) => (
                            <button key={t.label} aria-label={t.label} className="flex w-[30px] shrink-0 justify-center">{t.icon}</button>
                        ))}
                        <button aria-label="Масштаб дорожки" disabled className="flex w-[30px] shrink-0 justify-center text-[#505050]">
                            <ToolIcon>{VERTICAL_ARROW}<g transform="translate(2 0)"><Lens sign="plus" /></g></ToolIcon>
                        </button>
                    </div>
                </div>
            </section>

            <section className="mr-[2px] mt-1 min-h-[246px] bg-[#232323]">
                <header className="flex h-[31px] items-center gap-2 pl-3 text-[#c4c4c4]">
                    <h2>Частотный анализ</h2>
                    <Menu className="h-3 w-2" preserveAspectRatio="none" strokeWidth={2} />
                </header>
                <div className="flex h-[42px] items-start pl-[11px] pt-[5px]">
                    <label htmlFor="scale" className="w-[52px] leading-6">Масштаб:</label>
                    <div className="relative">
                        <select id="scale" className="h-[21px] w-[132px] appearance-none rounded-sm border border-[#353535] bg-[#1d1d1d] pl-[6px] text-[11px] text-[#d0d0d0]">
                            <option>Логарифмический</option>
                        </select>
                        <ChevronDown className="pointer-events-none absolute right-1 top-[5px] size-3 text-[#c0c0c0]" />
                    </div>
                    <button aria-label="Копировать" className="ml-4 mt-[3px]">
                        <svg width="15" height="15" fill="none" stroke="#b8b8b8">
                            <path d="M1 1h9v9H1z" strokeWidth="1.5" />
                            <path d="M11.5 5.5h2v8h-8v-2" strokeDasharray="1 1" />
                        </svg>
                    </button>
                    <span className="ml-[17px] w-[92px] whitespace-nowrap leading-6">Остановка кадра:</span>
                    <div className="flex gap-[3px]">
                        {SNAPSHOTS.map((s) => (
                            <div key={s.n} className="w-[23px]">
                                <button className={`block h-[21px] w-full rounded-sm border border-[#353535] ${s.on ? 'bg-[#171717] text-[#3391ff]' : 'bg-[#202020]'}`}>{s.n}</button>
                                <div className={`mt-px h-1 ${s.bar}`} />
                            </div>
                        ))}
                    </div>
                </div>
                <FrequencyPlot />
            </section>
        </div>
    );
}
